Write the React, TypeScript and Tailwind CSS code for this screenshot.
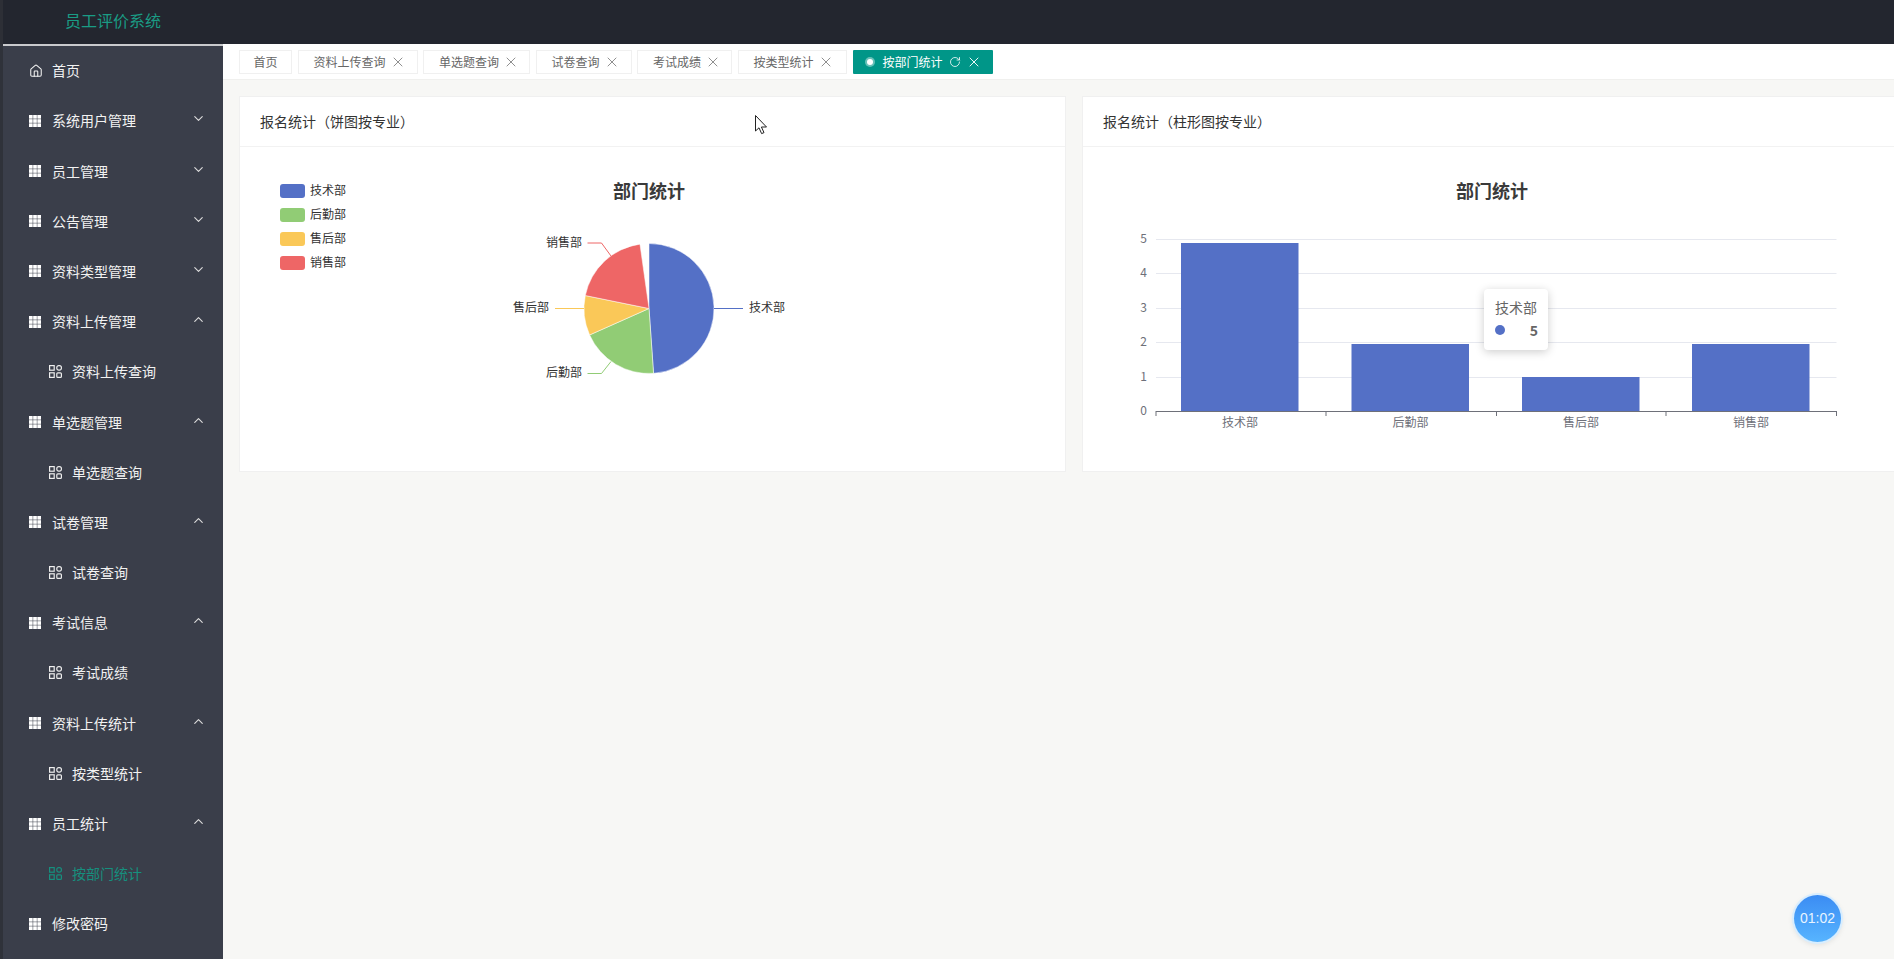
import { ChevronDown, ChevronUp, Home, RotateCw, X } from "lucide-react";

const menu = [
  { label: "首页", type: "home" },
  { label: "系统用户管理", type: "group", open: false },
  { label: "员工管理", type: "group", open: false },
  { label: "公告管理", type: "group", open: false },
  { label: "资料类型管理", type: "group", open: false },
  { label: "资料上传管理", type: "group", open: true },
  { label: "资料上传查询", type: "sub" },
  { label: "单选题管理", type: "group", open: true },
  { label: "单选题查询", type: "sub" },
  { label: "试卷管理", type: "group", open: true },
  { label: "试卷查询", type: "sub" },
  { label: "考试信息", type: "group", open: true },
  { label: "考试成绩", type: "sub" },
  { label: "资料上传统计", type: "group", open: true },
  { label: "按类型统计", type: "sub" },
  { label: "员工统计", type: "group", open: true },
  { label: "按部门统计", type: "sub", active: true },
  { label: "修改密码", type: "plain" },
];

const tabs = [
  { label: "资料上传查询", width: "w-[120px]" },
  { label: "单选题查询", width: "w-[107px]" },
  { label: "试卷查询", width: "w-[96px]" },
  { label: "考试成绩", width: "w-[95px]" },
  { label: "按类型统计", width: "w-[109px]" },
];

const legend = [
  { label: "技术部", color: "#5470c6" },
  { label: "后勤部", color: "#91cc75" },
  { label: "售后部", color: "#fac858" },
  { label: "销售部", color: "#ee6666" },
];

// angles are frozen mid-animation in the picture, the last slice stops short of the top
const slices = [
  { from: 0, to: 176, color: "#5470c6" },
  { from: 176, to: 246, color: "#91cc75" },
  { from: 246, to: 281.5, color: "#fac858" },
  { from: 281.5, to: 352, color: "#ee6666" },
];

const slicePath = (from: number, to: number) => {
  const cx = 649;
  const cy = 308.5;
  const r = 65;
  const point = (deg: number) => {
    const rad = (deg * Math.PI) / 180;
    return `${cx + r * Math.sin(rad)} ${cy - r * Math.cos(rad)}`;
  };
  return `M${cx} ${cy}L${point(from)}A${r} ${r} 0 ${to - from > 180 ? 1 : 0} 1 ${point(to)}Z`;
};

const GridIcon = () => (
  <svg width="12" height="12" viewBox="0 0 12 12" className="fill-white">
    {[0, 4.17, 8.33].map((y) =>
      [0, 4.17, 8.33].map((x) => <rect key={`${x}-${y}`} x={x} y={y} width="3.67" height="3.67" />)
    )}
  </svg>
);

const AppIcon = ({ className }: { className: string }) => (
  <svg width="13" height="13" viewBox="0 0 13 13" fill="none" strokeWidth="1.2" className={className}>
    <rect x="0.6" y="0.6" width="4.6" height="4.6" />
    <rect x="7.8" y="0.6" width="4.6" height="4.6" rx="2" />
    <rect x="0.6" y="7.8" width="4.6" height="4.6" />
    <rect x="7.8" y="7.8" width="4.6" height="4.6" rx="1" />
  </svg>
);

const MenuRow = ({ item }: { item: (typeof menu)[number] }) => {
  if (item.type === "sub") {
    return (
      <div className={`h-[50.2px] flex items-center pl-[46px] gap-[10px] text-[14px] ${item.active ? "text-[#168f7e]" : "text-[#f2f2f2]"}`}>
        <AppIcon className={item.active ? "stroke-[#168f7e]" : "stroke-[#eeeeee]"} />
        <span>{item.label}</span>
      </div>
    );
  }
  return (
    <div className="h-[50.2px] flex items-center pl-[26px] pr-[17px] text-[14px] text-[#f2f2f2]">
      <span className="w-[23px] flex">
        {item.type === "home" ? <Home className="h-[14px] w-[14px]" strokeWidth={1.8} /> : <GridIcon />}
      </span>
      <span className="flex-1">{item.label}</span>
      {item.type === "group" &&
        (item.open ? (
          <ChevronUp className="h-[15px] w-[15px] text-[#dddddd] mb-[4px]" strokeWidth={1.8} />
        ) : (
          <ChevronDown className="h-[15px] w-[15px] text-[#dddddd] mb-[4px]" strokeWidth={1.8} />
        ))}
    </div>
  );
};

const ChartTitle = ({ x }: { x: number }) => (
  <text x={x} y="198" textAnchor="middle" fontSize="18" fontWeight="700" fill="#3a3a3a">
    部门统计
  </text>
);

const PieChart = () => (
  <svg viewBox="240 147 826 324" className="w-[826px] h-[324px] block">
    <ChartTitle x={649} />
    {legend.map((l, i) => (
      <g key={l.label}>
        <rect x="280" y={184 + i * 24} width="25" height="14" rx="3" fill={l.color} />
        <text x="310" y={194.5 + i * 24} fontSize="12" fill="#333333">
          {l.label}
        </text>
      </g>
    ))}
    {slices.map((s) => (
      <path key={s.color} d={slicePath(s.from, s.to)} fill={s.color} stroke="#ffffff" strokeWidth="0.5" />
    ))}
    <g fill="none" strokeWidth="1">
      <path d="M714 308.5H743" stroke="#5470c6" />
      <path d="M611 361.5L601.5 373.5H587.5" stroke="#91cc75" />
      <path d="M584 308.5H555" stroke="#fac858" />
      <path d="M611 256L601.5 243H587.5" stroke="#ee6666" />
    </g>
    <g fontSize="12" fill="#333333">
      <text x="749" y="312">技术部</text>
      <text x="546" y="377">后勤部</text>
      <text x="513" y="312">售后部</text>
      <text x="546" y="247">销售部</text>
    </g>
  </svg>
);

const gridLines = [239, 273, 308, 342, 377];
const bars = [
  { x: 1181, top: 243 },
  { x: 1351.5, top: 344 },
  { x: 1522, top: 377 },
  { x: 1692, top: 344 },
];
const ticks = [1156, 1326, 1496.5, 1666, 1836.5];

const BarChart = () => (
  <svg viewBox="1083 147 826 324" className="w-[826px] h-[324px] block">
    <ChartTitle x={1492} />
    {gridLines.map((y) => (
      <path key={y} d={`M1156 ${y + 0.5}H1836.5`} stroke="#e6e8ef" strokeWidth="1" />
    ))}
    {bars.map((b) => (
      <rect key={b.x} x={b.x} y={b.top} width="117.5" height={411 - b.top} fill="#5470c6" />
    ))}
    <path d="M1156 411.5H1836.5" stroke="#6e7079" strokeWidth="1" />
    {ticks.map((x) => (
      <path key={x} d={`M${x} 411V416`} stroke="#6e7079" strokeWidth="1" />
    ))}
    <g fontSize="12" fill="#6e7079" textAnchor="end">
      {[5, 4, 3, 2, 1, 0].map((n, i) => (
        <text key={n} x="1147" y={[243, 277, 312, 346, 381, 415][i]}>
          {n}
        </text>
      ))}
    </g>
    <g fontSize="12" fill="#6e7079" textAnchor="middle">
      {legend.map((l, i) => (
        <text key={l.label} x={[1240, 1410.5, 1581, 1751][i]} y="427">
          {l.label}
        </text>
      ))}
    </g>
  </svg>
);

const Card = ({ title, children }: { title: string; children: React.ReactNode }) => (
  <div className="w-[827px] shrink-0 bg-white border border-[#f0f0f0] relative">
    <div className="h-[50px] border-b border-[#f2f2f2] flex items-center pl-[20px] pb-[1px] text-[14px] text-[#333333]">{title}</div>
    {children}
  </div>
);

export default function App() {
  return (
    <div className="h-[959px] w-[1894px] overflow-hidden relative flex flex-col bg-[#f7f7f5] [font-family:'Noto_Sans_CJK_SC',sans-serif]">
      <div className="h-[44px] shrink-0 bg-[#23262f] border-l-[3px] border-[#2d2f36] pl-[62px] pb-[4px] flex items-center text-[16px] text-[#1a9c85]">
        员工评价系统
      </div>
      <div className="flex flex-1 min-h-0">
        <div className="w-[223px] shrink-0 bg-[#3a3e4a] border-l-[3px] border-[#2f323a]">
          <div className="h-[1.6px] bg-[#c9cacd]" />
          {menu.map((item) => (
            <MenuRow key={item.label} item={item} />
          ))}
        </div>
        <div className="flex-1 min-w-0 flex flex-col">
          <div className="h-[36px] shrink-0 bg-white border-b border-[#f0f0ee] flex items-start pt-[6px] pl-[16px] gap-[5.5px] text-[12px] text-[#666666]">
            <div className="w-[53px] h-[24px] border border-[#f0f0f0] flex items-center justify-center">首页</div>
            {tabs.map((t) => (
              <div key={t.label} className={`${t.width} h-[24px] border border-[#f0f0f0] flex items-center pl-[15px]`}>
                <span>{t.label}</span>
                <X className="h-[16px] w-[16px] ml-[4px]" strokeWidth={1.1} />
              </div>
            ))}
            <div className="w-[140px] h-[24px] bg-[#009688] text-white flex items-center pl-[14px] rounded-[1px] ml-[0.5px]">
              <span className="w-[6px] h-[6px] rounded-full bg-white ring-2 ring-white/40" />
              <span className="ml-[10px]">按部门统计</span>
              <RotateCw className="h-[12px] w-[12px] ml-[6px]" strokeWidth={1.6} />
              <X className="h-[16px] w-[16px] ml-[5px]" strokeWidth={1.4} />
            </div>
          </div>
          <div className="flex gap-[16px] pt-[16px] pl-[16px]">
            <Card title="报名统计（饼图按专业）">
              <PieChart />
            </Card>
            <Card title="报名统计（柱形图按专业）">
              <BarChart />
            </Card>
          </div>
        </div>
      </div>

      {/* tooltip over the bar chart */}
      <div className="absolute left-[1484px] top-[289px] w-[64px] h-[61px] bg-white rounded-[4px] shadow-[0_2px_10px_rgba(0,0,0,0.2)] px-[11px] pt-[8px] text-[14px]">
        <div className="text-[#666666] leading-[20px] whitespace-nowrap">技术部</div>
        <div className="flex items-center justify-between mt-[3px] leading-[20px]">
          <span className="w-[10px] h-[10px] rounded-full bg-[#5470c6]" />
          <span className="font-bold text-[#666666] -mr-[1px]">5</span>
        </div>
      </div>

      {/* timer bubble */}
      <div className="absolute left-[1794px] top-[895px] w-[47px] h-[47px] rounded-full bg-gradient-to-b from-[#3b8cf3] to-[#57b4ff] ring-2 ring-[#d8eeff] shadow-[0_2px_6px_rgba(0,0,0,0.12)] flex items-center justify-center text-[14px] text-[#e8f4ff] [font-family:'Liberation_Sans',sans-serif]">
        01:02
      </div>

      {/* mouse pointer in the capture */}
      <svg width="14" height="20" viewBox="0 0 14 20" className="absolute left-[755px] top-[115px]">
        <path d="M0.5 0.5V16L4 12.8L6.6 18.6L9 17.6L6.4 12H11.5Z" fill="#ffffff" stroke="#222222" strokeWidth="1" />
      </svg>
    </div>
  );
}
